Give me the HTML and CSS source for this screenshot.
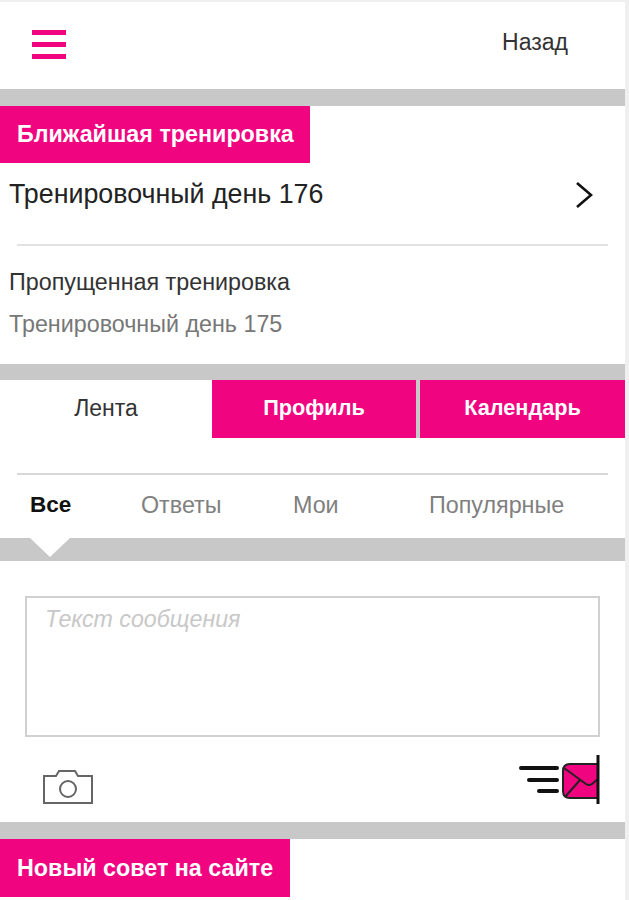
FILE: index.html
```html
<!DOCTYPE html>
<html lang="ru">
<head>
  <meta charset="UTF-8">
  <meta name="viewport" content="width=device-width, initial-scale=1.0">
  <title>Лента</title>
  <link rel="stylesheet" href="styles.css">
</head>
<body>
  <div class="page">
    <header class="top-bar">
      <div class="burger"><span></span><span></span><span></span></div>
      <a class="back-link">Назад</a>
    </header>
    <div class="band"></div>

    <section class="next-training">
      <h2 class="badge">Ближайшая тренировка</h2>
      <div class="training-row">
        <span>Тренировочный день 176</span>
        <svg class="chevron" width="18" height="28" viewBox="0 0 18 28">
          <path d="M2 2 L16 14 L2 26" fill="none" stroke="#111" stroke-width="2.6"/>
        </svg>
      </div>
      <div class="missed">
        <div class="missed-title">Пропущенная тренировка</div>
        <div class="missed-day">Тренировочный день 175</div>
      </div>
    </section>
    <div class="band"></div>

    <nav class="tabs">
      <div class="tab tab-active">Лента</div>
      <div class="tab tab-profile">Профиль</div>
      <div class="tab tab-calendar">Календарь</div>
    </nav>

    <div class="filters">
      <span class="filter filter-active">Все</span>
      <span class="filter filter-answers">Ответы</span>
      <span class="filter filter-mine">Мои</span>
      <span class="filter filter-popular">Популярные</span>
    </div>
    <div class="band band-notch"></div>

    <section class="composer">
      <div class="message-box">Текст сообщения</div>
      <div class="composer-actions">
        <svg class="camera" width="52" height="36" viewBox="0 0 52 36">
          <path d="M2 7 H14 L17 2 H33 L36 7 H50 V34 H2 Z" fill="none" stroke="#666" stroke-width="2"/>
          <circle cx="26" cy="20" r="8" fill="none" stroke="#666" stroke-width="2"/>
        </svg>
        <svg width="82" height="50" viewBox="0 0 82 50">
          <path d="M3 13 H39 M11 25 H39 M21 36 H39" stroke="#111" stroke-width="4" stroke-linecap="round"/>
          <path d="M80 9 H52 Q45 9 45 16 V36 Q45 43 52 43 H80 Z" fill="#f0047f" stroke="#222" stroke-width="2"/>
          <path d="M46 13 L68 29 Q71 31 74 29 L80 24 M47 42 L62 25" fill="none" stroke="#222" stroke-width="2"/>
          <path d="M80 0 V49" stroke="#111" stroke-width="3"/>
        </svg>
      </div>
    </section>
    <div class="band"></div>

    <h2 class="badge badge-tip">Новый совет на сайте</h2>
  </div>
</body>
</html>
```

FILE: styles.css
```css
html, body {
  margin: 0;
  padding: 0;
  height: 900px;
  overflow: hidden;
  background: #efefef;
  font-family: "Liberation Sans", Arial, sans-serif;
  color: #222;
}

.page {
  width: 625px;
  height: 898px;
  margin-top: 2px;
  background: #fff;
}

.top-bar {
  height: 87px;
  box-sizing: border-box;
  display: flex;
  justify-content: space-between;
  align-items: center;
  padding: 0 57px 3px 32px;
}

.burger {
  width: 34px;
  display: flex;
  flex-direction: column;
  gap: 7px;
}

.burger span {
  height: 5px;
  background: #f0047f;
}

.back-link {
  margin-top: -3px;
  font-size: 23px;
  color: #333;
}

.band {
  height: 17px;
  background: #c8c8c8;
}

.badge {
  margin: 0;
  width: 310px;
  height: 57px;
  line-height: 57px;
  padding-left: 17px;
  box-sizing: border-box;
  background: #f0047f;
  color: #fff;
  font-size: 23.3px;
  font-weight: bold;
}

.badge-tip {
  width: 290px;
  height: 58px;
  line-height: 58px;
}

.training-row {
  height: 63px;
  display: flex;
  justify-content: space-between;
  align-items: center;
  padding: 0 32px 0 9px;
  font-size: 26.8px;
  color: #222;
}

.missed {
  margin: 18px 17px 0;
  height: 120px;
  border-top: 2px solid #e2e2e2;
  box-sizing: border-box;
  padding-top: 23px;
}

.missed-title {
  margin-left: -8px;
  font-size: 23.3px;
  color: #333;
}

.missed-day {
  margin: 15px 0 0 -8px;
  font-size: 23.3px;
  color: #777;
}

.tabs {
  display: flex;
  height: 58px;
  margin-top: -1px;
}

.tab {
  display: flex;
  justify-content: center;
  align-items: center;
  background: #f0047f;
  color: #fff;
  font-size: 21.7px;
  font-weight: bold;
  padding-bottom: 2px;
  box-sizing: border-box;
}

.tab-active {
  flex: 0 0 212px;
  background: #fff;
  color: #333;
  font-size: 23px;
  font-weight: normal;
}

.tab-profile {
  flex: 0 0 204px;
}

.tab-calendar {
  flex: 0 0 209px;
  border-left: 4px solid #c8c8c8;
}

.filters {
  position: relative;
  margin: 35px 17px 0;
  height: 65px;
  border-top: 2px solid #d8d8d8;
  box-sizing: border-box;
  font-size: 23.3px;
  color: #808080;
}

.filter {
  position: absolute;
  top: 17px;
}

.filter-active {
  left: 13px;
  color: #111;
  font-size: 22.5px;
  font-weight: bold;
}

.filter-answers {
  left: 124px;
}

.filter-mine {
  left: 276px;
}

.filter-popular {
  left: 412px;
}

.band-notch {
  position: relative;
  height: 23px;
}

.band-notch::after {
  content: "";
  position: absolute;
  top: 0;
  left: 30px;
  border-left: 20px solid transparent;
  border-right: 20px solid transparent;
  border-top: 19px solid #fff;
}

.composer {
  height: 261px;
  box-sizing: border-box;
  padding: 35px 25px 0;
}

.message-box {
  height: 141px;
  box-sizing: border-box;
  border: 2px solid #d0d0d0;
  padding: 8px 18px;
  font-size: 23.2px;
  font-style: italic;
  color: #c8c8c8;
}

.composer-actions {
  display: flex;
  justify-content: space-between;
  align-items: flex-start;
  padding: 18px 0 0 17px;
}

.camera {
  margin-top: 14px;
}
```
